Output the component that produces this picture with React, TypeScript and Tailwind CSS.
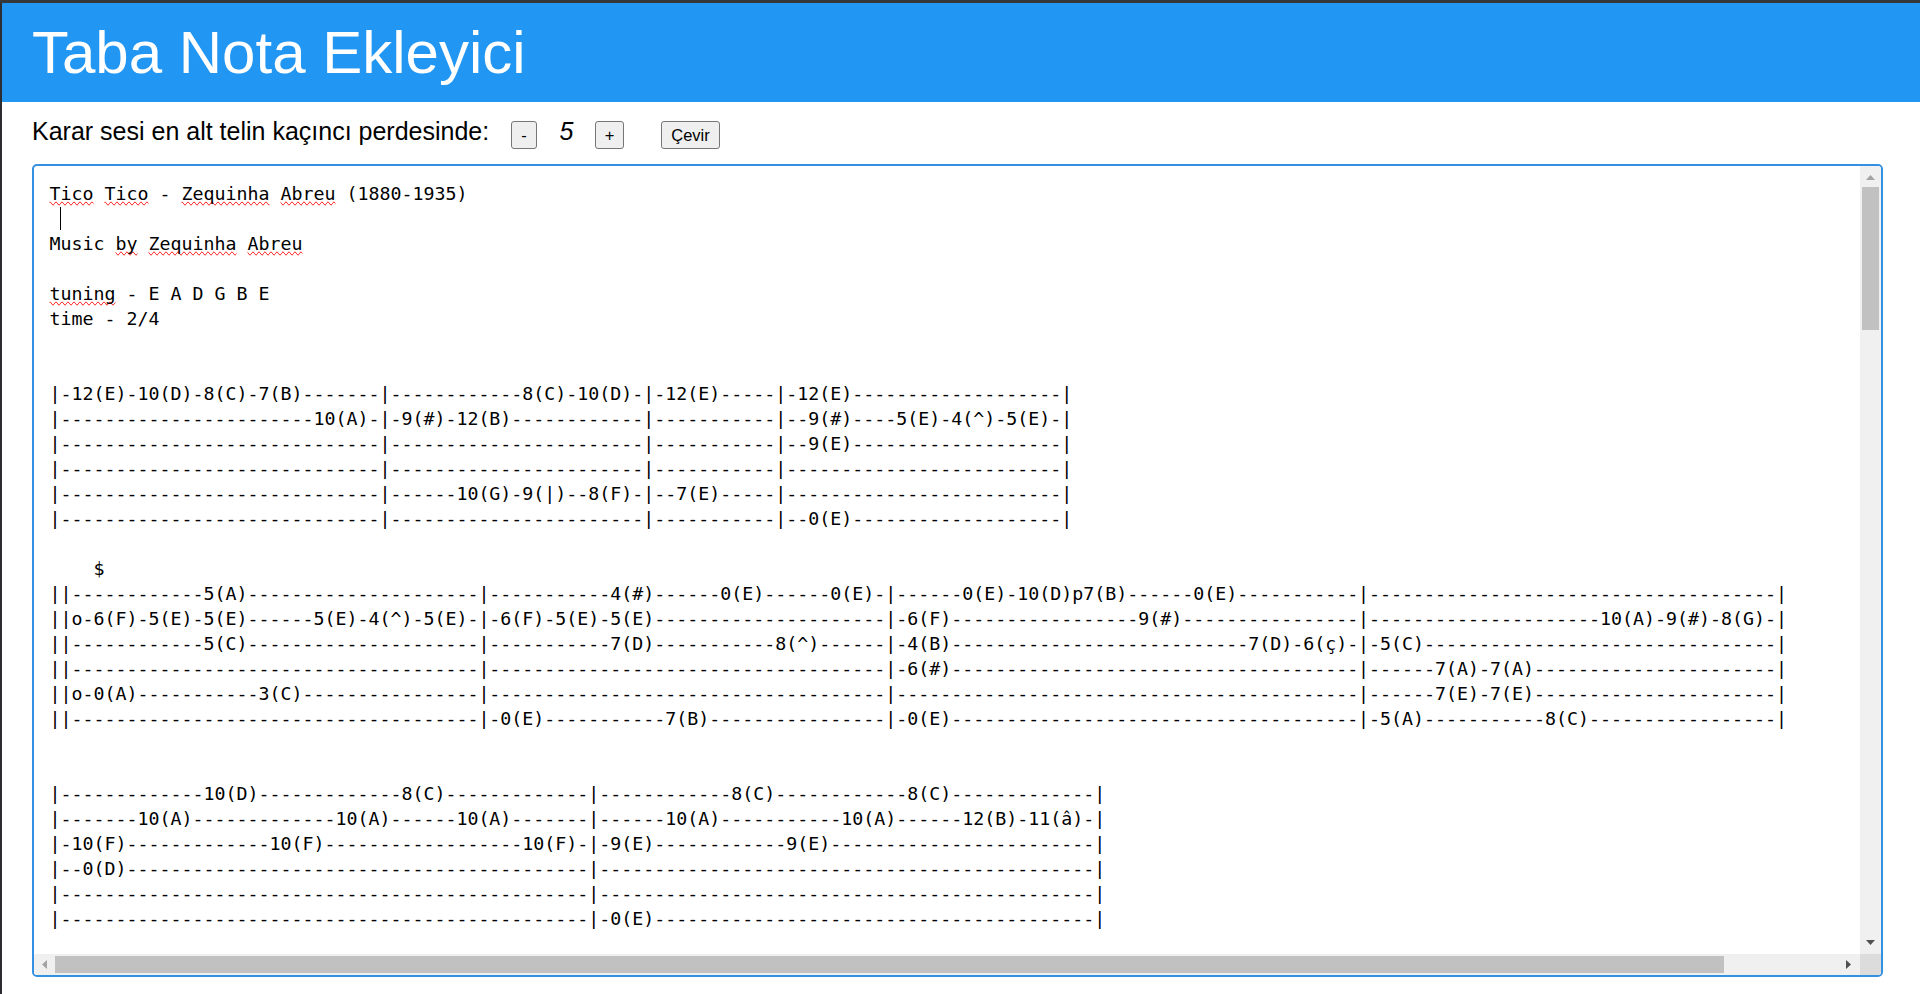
type Notes = Record<number, string>;

/** Draws one staff: bar lines at the given columns, notes over a dashed string. */
function staff(bars: number[], rows: Notes[]): string[] {
  const width = bars[bars.length - 1] + 1;
  return rows.map((notes) => {
    const cells = Array<string>(width).fill("-");
    bars.forEach((b) => (cells[b] = "|"));
    Object.entries(notes).forEach(([col, text]) =>
      [...text].forEach((ch, i) => (cells[Number(col) + i] = ch)),
    );
    return cells.join("");
  });
}

const intro = staff([0, 30, 54, 66, 92], [
  { 2: "12(E)", 8: "10(D)", 14: "8(C)", 19: "7(B)", 43: "8(C)", 48: "10(D)", 56: "12(E)", 68: "12(E)" },
  { 24: "10(A)", 32: "9(#)", 37: "12(B)", 69: "9(#)", 77: "5(E)", 82: "4(^)", 87: "5(E)" },
  { 69: "9(E)" },
  {},
  { 37: "10(G)", 43: "9(|)", 49: "8(F)", 57: "7(E)" },
  { 69: "0(E)" },
]);

const theme = staff([0, 1, 39, 76, 119, 157], [
  { 14: "5(A)", 51: "4(#)", 61: "0(E)", 71: "0(E)", 83: "0(E)", 88: "10(D)p7(B)", 104: "0(E)" },
  { 2: "o", 4: "6(F)", 9: "5(E)", 14: "5(E)", 24: "5(E)", 29: "4(^)", 34: "5(E)", 41: "6(F)", 46: "5(E)", 51: "5(E)", 78: "6(F)", 99: "9(#)", 141: "10(A)", 147: "9(#)", 152: "8(G)" },
  { 14: "5(C)", 51: "7(D)", 66: "8(^)", 78: "4(B)", 109: "7(D)", 114: "6(ç)", 121: "5(C)" },
  { 78: "6(#)", 126: "7(A)", 131: "7(A)" },
  { 2: "o", 4: "0(A)", 19: "3(C)", 126: "7(E)", 131: "7(E)" },
  { 41: "0(E)", 56: "7(B)", 78: "0(E)", 121: "5(A)", 136: "8(C)" },
]);

const bridge = staff([0, 49, 95], [
  { 14: "10(D)", 32: "8(C)", 62: "8(C)", 78: "8(C)" },
  { 8: "10(A)", 26: "10(A)", 37: "10(A)", 56: "10(A)", 72: "10(A)", 83: "12(B)", 89: "11(â)" },
  { 2: "10(F)", 20: "10(F)", 43: "10(F)", 51: "9(E)", 67: "9(E)" },
  { 3: "0(D)" },
  {},
  { 51: "0(E)" },
]);

const tabs = [...intro, "", "    $", ...theme, "", "", ...bridge].join("\n");

function Typo({ children }: { children: string }) {
  return <span className="[text-decoration-line:spelling-error]">{children}</span>;
}

const button =
  "h-7 rounded-[3px] border border-[#767676] bg-[#efefef] text-center text-[16.5px] leading-[24px] text-black";

export default function App() {
  return (
    <div className="flex h-[994px] w-[1920px] flex-col overflow-hidden bg-white font-['Liberation_Sans',sans-serif] text-black">
      <div className="h-[3px] shrink-0 bg-[#35383b]" />
      <div className="flex min-h-0 flex-1">
        <div className="w-[2px] shrink-0 bg-[#2b2d30]" />
        <div className="flex min-w-0 flex-1 flex-col">
          <header className="flex h-[99px] shrink-0 items-center bg-[#2196f3] pl-[30px]">
            <h1 className="text-[60px] leading-[90px] text-white">Taba Nota Ekleyici</h1>
          </header>
          <div className="flex h-[62px] shrink-0 pl-[30px]">
            <label className="w-[479px] pt-[11px] text-[25px] leading-[37px]">
              Karar sesi en alt telin kaçıncı perdesinde:
            </label>
            <button className={`${button} mt-[19px] w-[26px]`}>-</button>
            <span className="w-[58px] pt-[11px] pl-px text-center text-[25px] leading-[37px] italic">5</span>
            <button className={`${button} mt-[19px] w-[29px]`}>+</button>
            <button className={`${button} mt-[19px] ml-[37px] w-[59px]`}>Çevir</button>
          </div>
          <div className="mr-[37px] ml-[30px] flex h-[813px] shrink-0 flex-col overflow-hidden rounded-[5px] border-2 border-[#3490e0]">
            <div className="flex min-h-0 flex-1">
              <pre className="min-w-0 flex-1 overflow-hidden pt-[15px] pl-[15.5px] font-['DejaVu_Sans_Mono',monospace] text-[18.27px] leading-[25px]">
                <Typo>Tico</Typo> <Typo>Tico</Typo> - <Typo>Zequinha</Typo> <Typo>Abreu</Typo> (1880-1935){"\n "}
                <span className="mt-px -ml-px inline-block h-[23px] w-px bg-black align-top" />
                {"\n"}Music <Typo>by</Typo> <Typo>Zequinha</Typo> <Typo>Abreu</Typo>
                {"\n\n"}
                <Typo>tuning</Typo> - E A D G B E{"\ntime - 2/4\n\n\n"}
                {tabs}
              </pre>
              <div className="flex w-[21px] shrink-0 flex-col items-center bg-[#f0f0f0]">
                <svg className="h-[21px] w-[21px]" viewBox="0 0 21 21">
                  <path d="M6 14h9l-4.5-5z" fill="#a3a3a3" />
                </svg>
                <div className="h-[143px] w-[17px] bg-[#c1c1c1]" />
                <svg className="mt-auto h-[21px] w-[21px]" viewBox="0 0 21 21">
                  <path d="M6 7h9l-4.5 5z" fill="#505050" />
                </svg>
              </div>
            </div>
            <div className="flex h-[21px] shrink-0 items-center bg-[#f0f0f0]">
              <svg className="h-[21px] w-[21px]" viewBox="0 0 21 21">
                <path d="M13 6v9l-5-4.5z" fill="#a3a3a3" />
              </svg>
              <div className="h-[17px] w-[1669px] bg-[#c1c1c1]" />
              <svg className="ml-auto h-[21px] w-[21px]" viewBox="0 0 21 21">
                <path d="M7 6v9l5-4.5z" fill="#505050" />
              </svg>
              <div className="h-[21px] w-[21px] bg-[#dcdcdc]" />
            </div>
          </div>
        </div>
      </div>
    </div>
  );
}
